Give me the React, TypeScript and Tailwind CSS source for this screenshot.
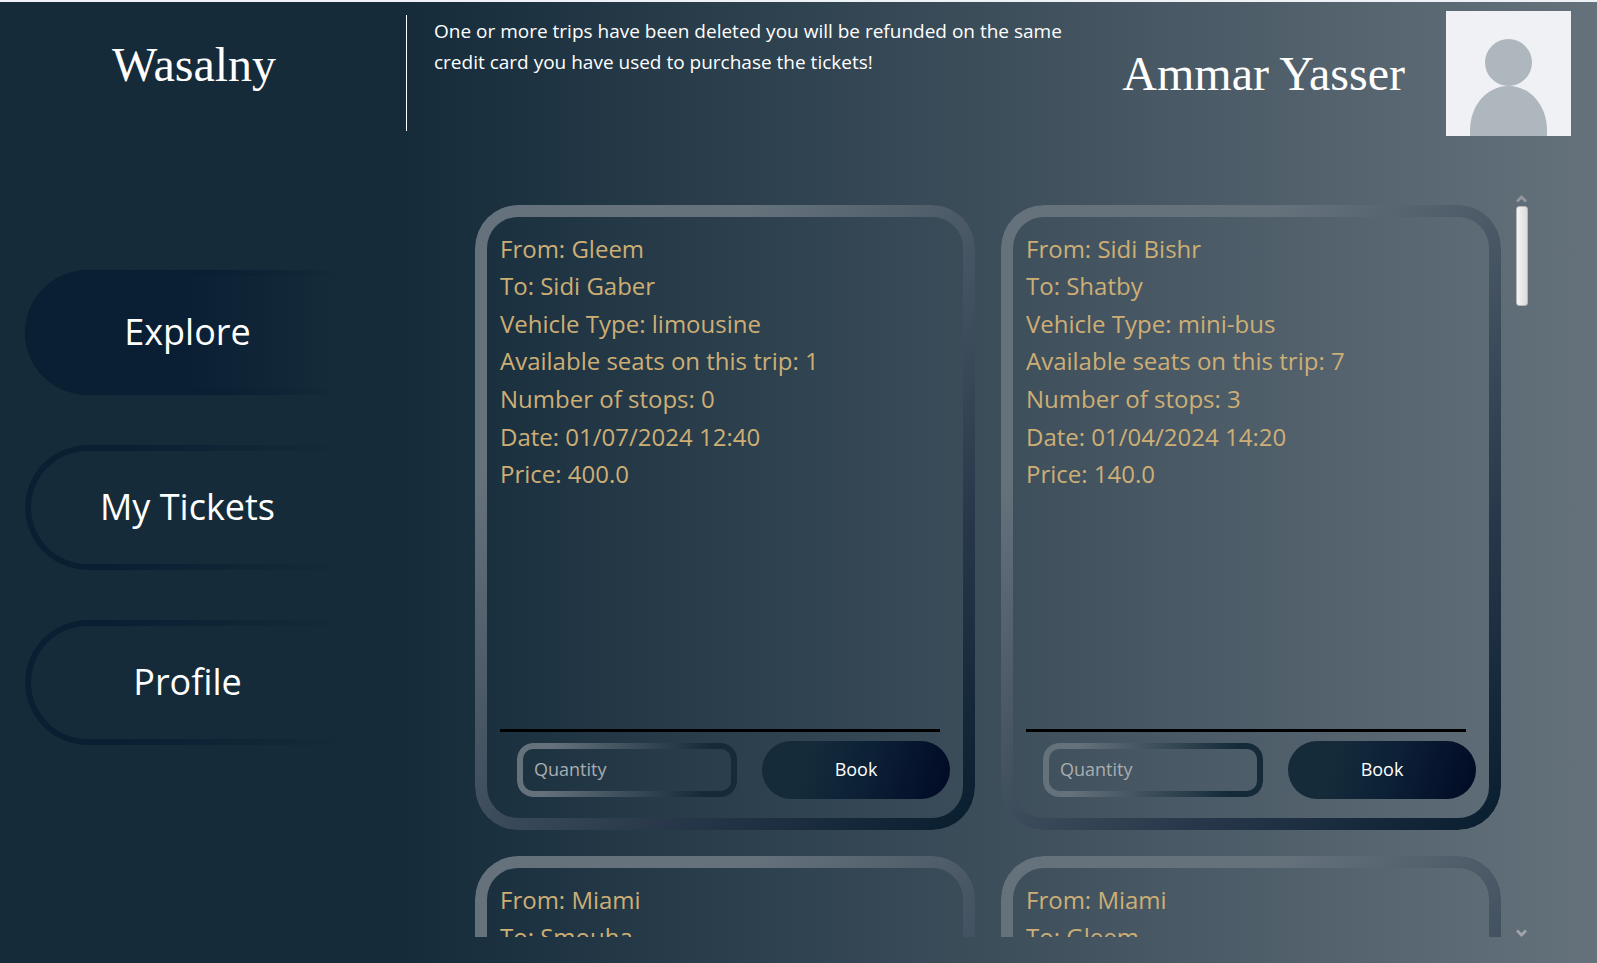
import { useState } from "react";

type Trip = {
  id: string;
  from: string;
  to: string;
  vehicle: string;
  seats: number;
  stops: number;
  date: string;
  price: string;
};

const trips: Trip[] = [
  { id: "t1", from: "Gleem", to: "Sidi Gaber", vehicle: "limousine", seats: 1, stops: 0, date: "01/07/2024 12:40", price: "400.0" },
  { id: "t2", from: "Sidi Bishr", to: "Shatby", vehicle: "mini-bus", seats: 7, stops: 3, date: "01/04/2024 14:20", price: "140.0" },
  { id: "t3", from: "Miami", to: "Smouha", vehicle: "bus", seats: 20, stops: 2, date: "01/05/2024 10:00", price: "80.0" },
  { id: "t4", from: "Miami", to: "Gleem", vehicle: "mini-bus", seats: 9, stops: 1, date: "01/06/2024 09:30", price: "120.0" },
];

const pages = ["Explore", "My Tickets", "Profile"];

// Paints only the padding area of a pseudo-element, leaving its middle see-through.
const ring =
  "relative before:pointer-events-none before:absolute before:inset-0 before:content-[''] before:[mask:linear-gradient(#000_0_0)_content-box_exclude,linear-gradient(#000_0_0)]";

function NavButton({ label, active, onSelect }: { label: string; active: boolean; onSelect: () => void }) {
  return (
    <button
      type="button"
      onClick={onSelect}
      aria-current={active ? "page" : undefined}
      className={`${ring} h-[125px] w-full rounded-l-[63px] pb-[2px] text-[36px] text-white before:rounded-l-[63px] before:bg-[linear-gradient(90deg,#0a1f32_25%,#0a1f3200_97%)] before:py-[6px] before:pl-[6px] ${
        active ? "bg-[linear-gradient(90deg,#0a1f33_50%,#0a1f3300_95%)]" : ""
      }`}
    >
      <span className="relative">{label}</span>
    </button>
  );
}

function TripCard({ trip }: { trip: Trip }) {
  const rows = [
    `From: ${trip.from}`,
    `To: ${trip.to}`,
    `Vehicle Type: ${trip.vehicle}`,
    `Available seats on this trip: ${trip.seats}`,
    `Number of stops: ${trip.stops}`,
    `Date: ${trip.date}`,
    `Price: ${trip.price}`,
  ];
  return (
    <article
      className={`${ring} flex h-[625px] flex-col px-[25px] pt-[25px] pb-[31px] before:rounded-[43px] before:bg-[linear-gradient(135deg,#65727c_25%,#28384a_72%,#0a1f30_98%)] before:p-[12px]`}
    >
      <ul className="grid h-[263px] text-[24px] text-[#cdae75]">
        {rows.map((row) => (
          <li key={row} className="flex items-center whitespace-nowrap">
            {row}
          </li>
        ))}
      </ul>
      <hr className="mt-auto mr-[10px] border-t-[3px] border-black" />
      <form className="mt-[9px] flex items-center justify-between pl-[17px]" onSubmit={(e) => e.preventDefault()}>
        <div
          className={`${ring} h-[54px] w-[220px] before:rounded-[16px] before:bg-[linear-gradient(100deg,#65727c_15%,#152b3a_85%)] before:p-[6px]`}
        >
          <input
            type="text"
            id={`quantity-${trip.id}`}
            aria-label="Quantity"
            placeholder="Quantity"
            className="relative h-full w-full bg-transparent px-[17px] pb-[2px] text-[18px] text-white outline-none placeholder:text-[#a9adb0]"
          />
        </div>
        <button
          type="submit"
          className="h-[58px] w-[188px] rounded-[29px] bg-[linear-gradient(105deg,#152b3a_25%,#0c2036_55%,#020c26_95%)] pb-[2px] text-[18px] text-white"
        >
          Book
        </button>
      </form>
    </article>
  );
}

export default function App() {
  const [page, setPage] = useState("Explore");
  return (
    <div className="flex h-screen min-h-[600px] flex-col border-t-2 border-[#eef1f5] bg-[linear-gradient(90deg,#152b3a_25%,#65727c_100%)] font-['Open_Sans','Noto_Sans',sans-serif] text-white">
      <header className="flex h-[157px] shrink-0 pt-[9px] pr-[26px]">
        <h1 className="w-[406px] shrink-0 pt-[28px] pr-[18px] text-center font-['Liberation_Serif',serif] text-[48px] leading-[52px]">
          Wasalny
        </h1>
        <div className="mt-[4px] h-[116px] w-px shrink-0 bg-white" />
        <p className="mt-[5px] ml-[27px] w-[650px] text-[19px] leading-[31px]">
          One or more trips have been deleted you will be refunded on the same credit card you have used to purchase the
          tickets!
        </p>
        <div className="ml-auto flex h-[125px] items-center gap-[41px]">
          <span className="font-['Liberation_Serif',serif] text-[48px] leading-[52px] whitespace-nowrap">
            Ammar Yasser
          </span>
          <svg viewBox="0 0 125 125" className="size-[125px] shrink-0" role="img" aria-label="Profile picture">
            <rect width="125" height="125" fill="#eff1f4" />
            <circle cx="62.500" cy="51.500" r="23.500" fill="#aeb6be" />
            <path d="M24 125V120C24 94 41 75 62.500 75S101 94 101 120V125Z" fill="#aeb6be" />
          </svg>
        </div>
      </header>
      <div className="flex min-h-0 flex-1 pb-[26px]">
        <nav className="ml-[25px] flex w-[325px] shrink-0 flex-col gap-[50px] pt-[111px]">
          {pages.map((name) => (
            <NavButton key={name} label={name} active={name === page} onSelect={() => setPage(name)} />
          ))}
        </nav>
        <main className="ml-[125px] grid min-w-0 flex-1 auto-rows-min grid-cols-2 gap-[26px] overflow-y-auto pt-[46px] [scrollbar-width:none]">
          {trips.map((trip) => (
            <TripCard key={trip.id} trip={trip} />
          ))}
        </main>
        <div className="mr-[69px] ml-[14px] flex w-[13px] shrink-0 flex-col items-center pt-[35px]" aria-hidden="true">
          <svg viewBox="0 0 13 12" className="h-[12px] w-[13px]" fill="none" stroke="#92989e" strokeWidth="2.800">
            <path d="M2 7.500L6.500 3L11 7.500" />
          </svg>
          <div className="h-[100px] w-[12px] rounded-[3px] border border-[#b4b7ba] bg-linear-to-r from-[#f4f4f4] to-[#dcdcdc]" />
          <svg viewBox="0 0 13 10" className="mt-auto h-[10px] w-[13px]" fill="none" stroke="#a2a6aa" strokeWidth="2.800">
            <path d="M2 3.500L6.500 8L11 3.500" />
          </svg>
        </div>
      </div>
    </div>
  );
}
